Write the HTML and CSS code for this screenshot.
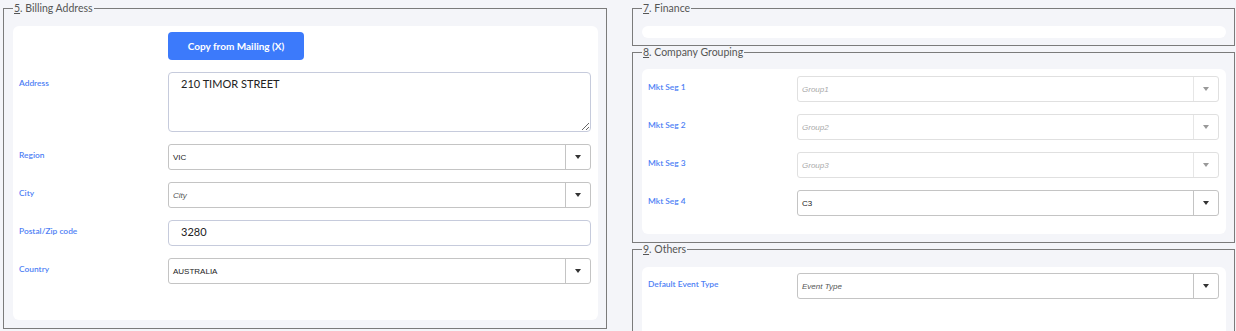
FILE: index.html
```html
<!DOCTYPE html>
<html lang="en">
<head>
    <meta charset="UTF-8">
    <meta name="viewport" content="width=device-width, initial-scale=1.0">
    <title>Customer Details</title>
    <link rel="stylesheet" href="styles.css">
</head>
<body>
    <div class="page">
        <!-- Left column -->
        <div class="column">
            <fieldset class="group">
                <legend><u>5</u>. Billing Address</legend>
                <div class="card form billing">
                    <span class="label"></span>
                    <button class="btn-copy" type="button">Copy from Mailing (X)</button>

                    <label class="label">Address</label>
                    <textarea class="text-area">210 TIMOR STREET</textarea>

                    <label class="label">Region</label>
                    <div class="combo">
                        <span class="combo-text">VIC</span>
                        <span class="combo-btn"><i class="caret"></i></span>
                    </div>

                    <label class="label">City</label>
                    <div class="combo">
                        <span class="combo-text placeholder">City</span>
                        <span class="combo-btn"><i class="caret"></i></span>
                    </div>

                    <label class="label">Postal/Zip code</label>
                    <input class="text-input" type="text" value="3280">

                    <label class="label">Country</label>
                    <div class="combo">
                        <span class="combo-text">AUSTRALIA</span>
                        <span class="combo-btn"><i class="caret"></i></span>
                    </div>
                </div>
            </fieldset>
        </div>

        <!-- Right column -->
        <div class="column">
            <fieldset class="group finance">
                <legend><u>7</u>. Finance</legend>
                <div class="card empty"></div>
            </fieldset>

            <fieldset class="group tight">
                <legend><u>8</u>. Company Grouping</legend>
                <div class="card form grouping">
                    <label class="label">Mkt Seg 1</label>
                    <div class="combo disabled">
                        <span class="combo-text placeholder">Group1</span>
                        <span class="combo-btn"><i class="caret"></i></span>
                    </div>

                    <label class="label">Mkt Seg 2</label>
                    <div class="combo disabled">
                        <span class="combo-text placeholder">Group2</span>
                        <span class="combo-btn"><i class="caret"></i></span>
                    </div>

                    <label class="label">Mkt Seg 3</label>
                    <div class="combo disabled">
                        <span class="combo-text placeholder">Group3</span>
                        <span class="combo-btn"><i class="caret"></i></span>
                    </div>

                    <label class="label">Mkt Seg 4</label>
                    <div class="combo">
                        <span class="combo-text">C3</span>
                        <span class="combo-btn"><i class="caret"></i></span>
                    </div>
                </div>
            </fieldset>

            <fieldset class="group">
                <legend><u>9</u>. Others</legend>
                <div class="card form others">
                    <label class="label">Default Event Type</label>
                    <div class="combo">
                        <span class="combo-text placeholder">Event Type</span>
                        <span class="combo-btn"><i class="caret"></i></span>
                    </div>
                </div>
            </fieldset>
        </div>
    </div>
</body>
</html>
```

FILE: styles.css
```css
/* Base */
body, html {
    margin: 0;
    padding: 0;
    background: #f4f5f9;
    font-family: 'Lato', 'Open Sans', sans-serif;
    overflow: hidden;
}

/* Two columns */
.page {
    display: grid;
    grid-template-columns: 604px 603px;
    column-gap: 25px;
    padding: 0 1px 0 3px;
}

.column {
    display: flex;
    flex-direction: column;
}

/* Fieldset groups */
.group {
    margin: 0;
    padding: 10px 8px 8px 9px;
    border: 1px solid #7b7b7b;
    min-width: 0;
}

.group + .group {
    margin-top: -2px;
}

.group.finance {
    padding-bottom: 7px;
}

.group.tight {
    padding-top: 9px;
}

.group legend {
    padding: 0 1px;
    font-size: 10.5px;
    line-height: 16px;
    color: #555;
}

/* White cards */
.card {
    background: #fff;
    border-radius: 6px;
}

.card.empty {
    height: 12px;
}

.form {
    display: grid;
    grid-template-columns: 149px 1fr;
    row-gap: 12px;
    align-items: start;
}

.billing {
    padding: 6px 7px 36px 6px;
}

.grouping {
    padding: 7px 7px 18px 6px;
}

.others {
    padding: 6px 7px 60px 6px;
}

/* Labels */
.label {
    padding-top: 6px;
    font-size: 8.4px;
    font-weight: 600;
    color: #4f7ff5;
}

/* Button */
.btn-copy {
    justify-self: start;
    width: 136px;
    height: 28px;
    border: none;
    border-radius: 4px;
    background: #3c7afb;
    color: #fff;
    font-family: inherit;
    font-size: 10px;
    font-weight: 700;
    cursor: pointer;
}

/* Text inputs */
.text-area,
.text-input {
    box-sizing: border-box;
    width: 100%;
    margin: 0;
    border: 1px solid #c6cbdc;
    border-radius: 4px;
    font-family: inherit;
    font-size: 11px;
    color: #222;
    padding: 4px 12px;
}

.text-area {
    height: 60px;
    resize: vertical;
}

.text-input {
    height: 26px;
    padding-bottom: 7px;
}

/* Combo boxes */
.combo {
    box-sizing: border-box;
    height: 26px;
    display: flex;
    border: 1px solid #c4c4c4;
    border-radius: 3px;
    background: #fff;
}

.combo-text {
    flex: 1;
    padding-left: 4px;
    display: flex;
    align-items: center;
    font-family: 'Liberation Sans', Arial, sans-serif;
    font-size: 8px;
    color: #222;
}

.combo-text.placeholder {
    font-style: italic;
    color: #555;
}

.combo-btn {
    width: 24px;
    border-left: 1px solid #c4c4c4;
    display: flex;
    align-items: center;
    justify-content: center;
}

.caret {
    width: 0;
    height: 0;
    border-left: 3px solid transparent;
    border-right: 3px solid transparent;
    border-top: 4px solid #333;
}

.combo.disabled {
    border-color: #e0e0e0;
}

.combo.disabled .combo-btn {
    border-left-color: #e6e6e6;
}

.combo.disabled .combo-text.placeholder {
    color: #aaa;
}

.combo.disabled .caret {
    border-top-color: #999;
}
```
